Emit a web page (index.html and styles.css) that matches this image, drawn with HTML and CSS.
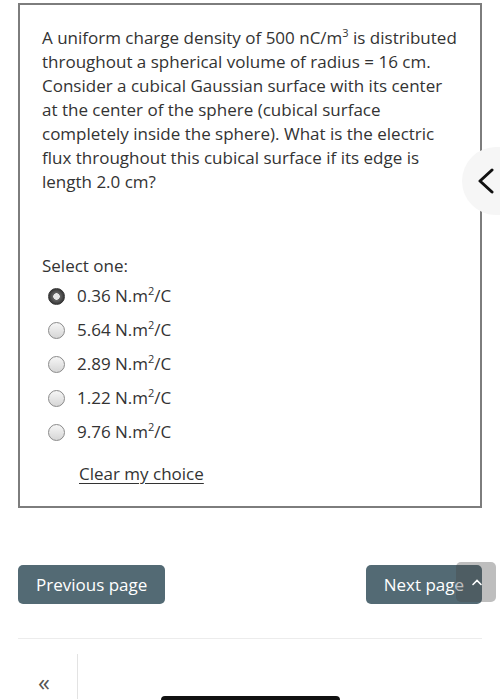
FILE: index.html
```html
<!DOCTYPE html>
<html>
<head>
<meta charset="utf-8">
<link rel="stylesheet" href="styles.css">
</head>
<body>
<div class="page">
  <div class="question">
    <p class="qtext">A uniform charge density of 500 nC/m<sup>3</sup> is distributed throughout a spherical volume of radius = 16 cm. Consider a cubical Gaussian surface with its center at the center of the sphere (cubical surface completely inside the sphere). What is the electric flux throughout this cubical surface if its edge is length 2.0 cm?</p>
    <div class="prompt">Select one:</div>
    <div class="answers">
      <label class="opt"><span class="radio checked"></span><span>0.36 N.m<sup>2</sup>/C</span></label>
      <label class="opt"><span class="radio"></span><span>5.64 N.m<sup>2</sup>/C</span></label>
      <label class="opt"><span class="radio"></span><span>2.89 N.m<sup>2</sup>/C</span></label>
      <label class="opt"><span class="radio"></span><span>1.22 N.m<sup>2</sup>/C</span></label>
      <label class="opt"><span class="radio"></span><span>9.76 N.m<sup>2</sup>/C</span></label>
    </div>
    <a class="clear">Clear my choice</a>
  </div>

  <div class="nav">
    <button class="btn">Previous page</button>
    <button class="btn">Next page</button>
  </div>
  <hr class="sep">
  <div class="footer">
    <div class="collapse">«</div>
    <div class="footmain"><div class="homebar"></div></div>
  </div>

  <div class="drawer-toggle">
    <svg width="20" height="26" viewBox="0 0 20 26"><path d="M16 2 L4 13 L16 24" fill="none" stroke="#111" stroke-width="3" stroke-linecap="round" stroke-linejoin="round"/></svg>
  </div>
  <div class="totop">
    <svg width="12" height="8" viewBox="0 0 12 8"><path d="M2 6.5 L6 2.5 L10 6.5" fill="none" stroke="#fff" stroke-width="1.6" stroke-linecap="round"/></svg>
  </div>
</div>
</body>
</html>
```
FILE: styles.css
```css
html, body {
  margin: 0;
  padding: 0;
  background: #fff;
  overflow: hidden;
}
body {
  font-family: "Open Sans", "Noto Sans", sans-serif;
  color: #333;
  width: 500px;
  height: 700px;
}
.page {
  position: relative;
  padding: 3px 18px 0 18px;
  height: 697px;
  overflow: hidden;
}
.question {
  border: 2px solid #7d7d7d;
  padding: 21px 22px 18px 22px;
  height: 462px;
}
.qtext {
  margin: 0;
  font-size: 17px;
  line-height: 24px;
}
sup {
  font-size: 11px;
  line-height: 0;
  vertical-align: 7px;
}
.prompt {
  margin-top: 60px;
  font-size: 17px;
  line-height: 24px;
}
.answers {
  display: flex;
  flex-direction: column;
  gap: 10px;
  margin-top: 6px;
  padding-left: 6px;
}
.opt {
  display: flex;
  align-items: center;
  gap: 12px;
  font-size: 17px;
  line-height: 24px;
}
.radio {
  width: 15px;
  height: 15px;
  border-radius: 50%;
  border: 1px solid #8a8a8a;
  background: linear-gradient(#f6f6f6, #d6d6d6);
  box-sizing: content-box;
}
.radio.checked {
  border: 1px solid #333;
  background: radial-gradient(circle, #e8e8e8 0 3px, #666 3.5px, #333 8px);
}
.clear {
  display: inline-block;
  margin-top: 18px;
  margin-left: 37px;
  font-size: 17px;
  line-height: 24px;
  text-decoration: underline;
  text-underline-offset: 3px;
  color: #333;
}
.nav {
  display: flex;
  justify-content: space-between;
  margin-top: 57px;
}
.btn {
  font-family: "Open Sans", "Noto Sans", sans-serif;
  font-size: 17px;
  color: #fff;
  background: #536a74;
  border: none;
  border-radius: 5px;
  height: 39px;
  padding: 0 18px;
}
.sep {
  border: none;
  border-top: 1px solid #ececec;
  margin: 34px 0 0 0;
}
.footer {
  display: flex;
  margin-top: 15px;
  height: 45px;
}
.collapse {
  width: 60px;
  border-right: 1px solid #e3e3e3;
  font-size: 24px;
  color: #555;
  padding-top: 16px;
  padding-left: 20px;
  box-sizing: border-box;
  line-height: 24px;
}
.footmain {
  flex: 1;
  position: relative;
}
.homebar {
  position: absolute;
  left: 83px;
  top: 42px;
  width: 179px;
  height: 8px;
  background: #111;
  border-radius: 4px;
}
.drawer-toggle {
  position: absolute;
  left: 462px;
  top: 147px;
  width: 38px;
  height: 68px;
  border-radius: 34px 0 0 34px;
  background: #f6f6f6;
  display: flex;
  align-items: center;
  padding-left: 14px;
  box-sizing: border-box;
}
.totop {
  position: absolute;
  left: 456px;
  top: 562px;
  width: 40px;
  height: 40px;
  border-radius: 5px;
  background: rgba(70, 70, 70, 0.35);
  display: flex;
  align-items: center;
  padding-left: 15px;
  box-sizing: border-box;
}
```
